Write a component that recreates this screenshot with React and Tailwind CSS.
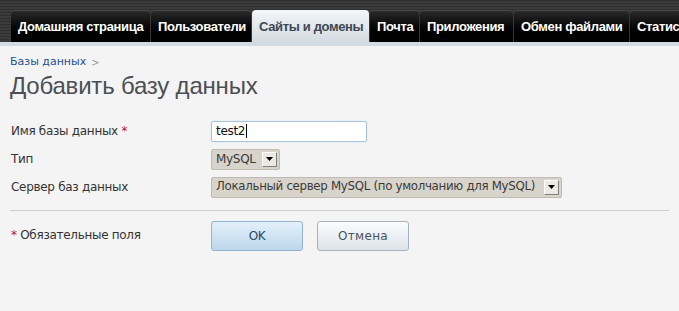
const tabs = [
  { label: 'Домашняя страница', w: 'w-[139px]' },
  { label: 'Пользователи', w: 'w-[100px]' },
  { label: 'Сайты и домены', w: 'w-[117px]', active: true },
  { label: 'Почта', w: 'w-[49px]' },
  { label: 'Приложения', w: 'w-[93px]' },
  { label: 'Обмен файлами', w: 'w-[115px]' },
  { label: 'Статистика', w: 'w-[100px]' },
];

const SelectArrow = () => (
  <span className="ml-[6px] flex h-[15px] w-[15px] shrink-0 items-center justify-center border border-t-white border-l-white border-r-[#808080] border-b-[#808080] bg-[#ece9e2]">
    <svg width="7" height="4" viewBox="0 0 7 4">
      <path d="M0 0h7L3.5 4z" fill="#000" />
    </svg>
  </span>
);

const App = () => {
  return (
    <div className="h-[311px] w-[679px] overflow-hidden bg-[#f4f4f4] font-['DejaVu_Sans',sans-serif]">
      {/* Top navigation */}
      <div className="flex h-[42px] items-end gap-[1px] overflow-hidden bg-[repeating-linear-gradient(180deg,#2e2e2e_0px,#2e2e2e_1px,#3b3b3b_1px,#3b3b3b_3px)] pl-[11px]">
        {tabs.map((t) => (
          <div
            key={t.label}
            className={`flex h-[32px] shrink-0 items-center overflow-hidden whitespace-nowrap rounded-t-[4px] pl-[7px] pt-[1px] font-['Liberation_Sans',sans-serif] text-[13px] font-bold tracking-[-0.35px] ${t.w} ${
              t.active
                ? 'bg-gradient-to-b from-[#f3f6f8] to-[#d3dbe2] text-[#3d4752]'
                : 'border-t border-[#4a4a4a] bg-gradient-to-b from-[#2a2a2a] via-[#080808] to-[#000] text-white'
            }`}
          >
            {t.label}
          </div>
        ))}
      </div>
      <div className="h-[4px] bg-[#d3dbe2]" />

      {/* Content */}
      <div className="px-[10px] pt-[8px]">
        <div className="flex items-center gap-[5px] text-[11px] text-[#1d4f8e]">
          Базы данных <span className="text-[10px] text-[#999]">&gt;</span>
        </div>
        <h1 className="mt-[1px] font-['Liberation_Sans',sans-serif] text-[24px] leading-[28px] tracking-[-0.2px] text-[#4b4f54]">
          Добавить базу данных
        </h1>

        <div className="mt-[21px] flex flex-col gap-[7px] text-[12px] tracking-[-0.3px] text-[#333]">
          <div className="flex items-center">
            <div className="w-[201px] pl-[1px]">
              Имя базы данных <span className="text-[#b5172b]">*</span>
            </div>
            <div className="flex h-[21px] w-[156px] items-center rounded-[2px] border border-[#a9c3da] bg-white pl-[4px] shadow-[0_0_2px_#cfe0ee] text-[#111]">
              test2<span className="ml-[1px] inline-block h-[14px] w-[1px] bg-black" />
            </div>
          </div>
          <div className="flex items-center">
            <div className="w-[201px] pl-[1px]">Тип</div>
            <div className="flex h-[21px] items-center rounded-[2px] border border-[#bfbbb2] bg-[#d8d4cb] pl-[4px] pr-[2px] text-[#3a3a3a]">
              MySQL
              <SelectArrow />
            </div>
          </div>
          <div className="flex items-center">
            <div className="w-[201px] pl-[1px]">Сервер баз данных</div>
            <div className="flex h-[21px] w-[351px] items-center rounded-[2px] border border-[#bfbbb2] bg-[#d8d4cb] pl-[4px] pr-[2px] text-[11.8px] text-[#3a3a3a]">
              <span className="flex-1 overflow-hidden whitespace-nowrap">Локальный сервер MySQL (по умолчанию для MySQL)</span>
              <SelectArrow />
            </div>
          </div>
        </div>

        <div className="mt-[12px] h-[1px] bg-[#cdcdcd]" />

        <div className="mt-[10px] flex items-start text-[12px] tracking-[-0.3px] text-[#333]">
          <div className="w-[201px] pt-[5px] pl-[1px]">
            <span className="text-[#b5172b]">*</span> Обязательные поля
          </div>
          <button className="h-[30px] w-[92px] rounded-[3px] border border-[#90b3d1] bg-gradient-to-b from-[#e4f0fa] to-[#bcd6ec] text-[12px] text-[#244a6e]">
            OK
          </button>
          <button className="ml-[14px] h-[30px] w-[92px] rounded-[3px] border border-[#a6b3bf] bg-gradient-to-b from-[#fbfcfd] to-[#dde3e9] text-[12px] tracking-[0.3px] text-[#4a5560]">
            Отмена
          </button>
        </div>
      </div>
    </div>
  );
};

export default App;
